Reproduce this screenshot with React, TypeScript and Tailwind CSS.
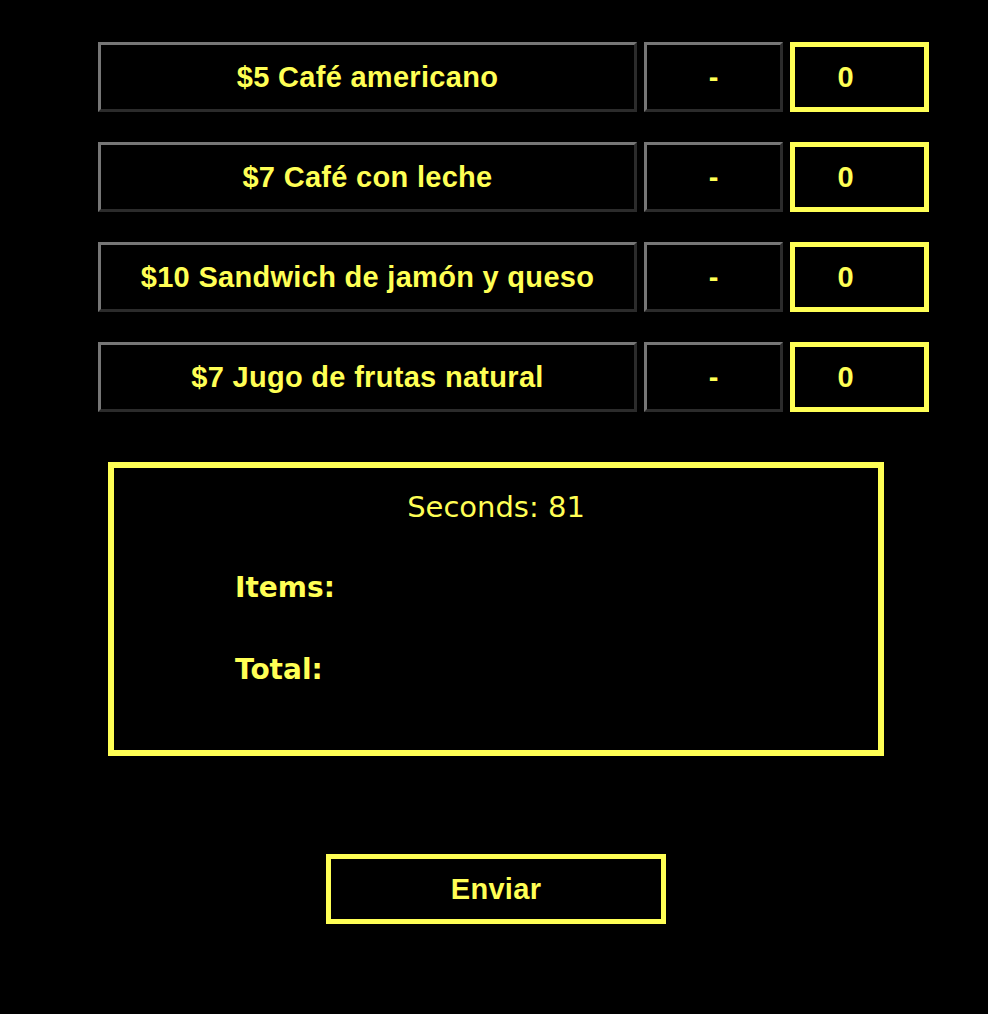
const products = [
  { name: "$5 Café americano" },
  { name: "$7 Café con leche" },
  { name: "$10 Sandwich de jamón y queso" },
  { name: "$7 Jugo de frutas natural" },
];

export default function App() {
  return (
    <div className="min-h-[1014px] w-[988px] bg-black pt-[42px] text-[#ffff55]">
      <div className="flex flex-col gap-[30px] pl-[98px]">
        {products.map((p) => (
          <div key={p.name} className="flex h-[70px] gap-[7px]">
            <button className="w-[539px] border-[3px] border-t-[#767676] border-l-[#767676] border-r-[#2b2b2b] border-b-[#2b2b2b] bg-black pt-[2px] font-['Liberation_Sans',Arial,sans-serif] text-[29px] font-bold tracking-[0.3px]">
              {p.name}
            </button>
            <button className="w-[139px] border-[3px] border-t-[#767676] border-l-[#767676] border-r-[#2b2b2b] border-b-[#2b2b2b] bg-black pt-[2px] font-['Liberation_Sans',Arial,sans-serif] text-[29px] font-bold">
              -
            </button>
            <input
              readOnly
              value="0"
              className="w-[139px] border-[5px] border-[#ffff55] bg-black pt-[2px] pr-[28px] text-center font-['Liberation_Sans',Arial,sans-serif] text-[29px] font-bold text-[#ffff55] outline-none"
            />
          </div>
        ))}
      </div>

      <div className="ml-[108px] mt-[50px] h-[294px] w-[776px] border-[6px] border-[#ffff55] font-['DejaVu_Sans',sans-serif]">
        <p className="pt-[21px] text-center text-[29px] leading-[36px]">
          Seconds: 81
        </p>
        <div className="pl-[121px]">
          <p className="mt-[45px] text-[28px] font-bold leading-[36px]">Items:</p>
          <p className="mt-[46px] text-[28px] font-bold leading-[36px]">Total:</p>
        </div>
      </div>

      <div className="ml-[326px] mt-[98px]">
        <button className="h-[70px] w-[340px] border-[5px] border-[#ffff55] bg-black pt-[2px] font-['Liberation_Sans',Arial,sans-serif] text-[29px] font-bold tracking-[0.3px]">
          Enviar
        </button>
      </div>
    </div>
  );
}
